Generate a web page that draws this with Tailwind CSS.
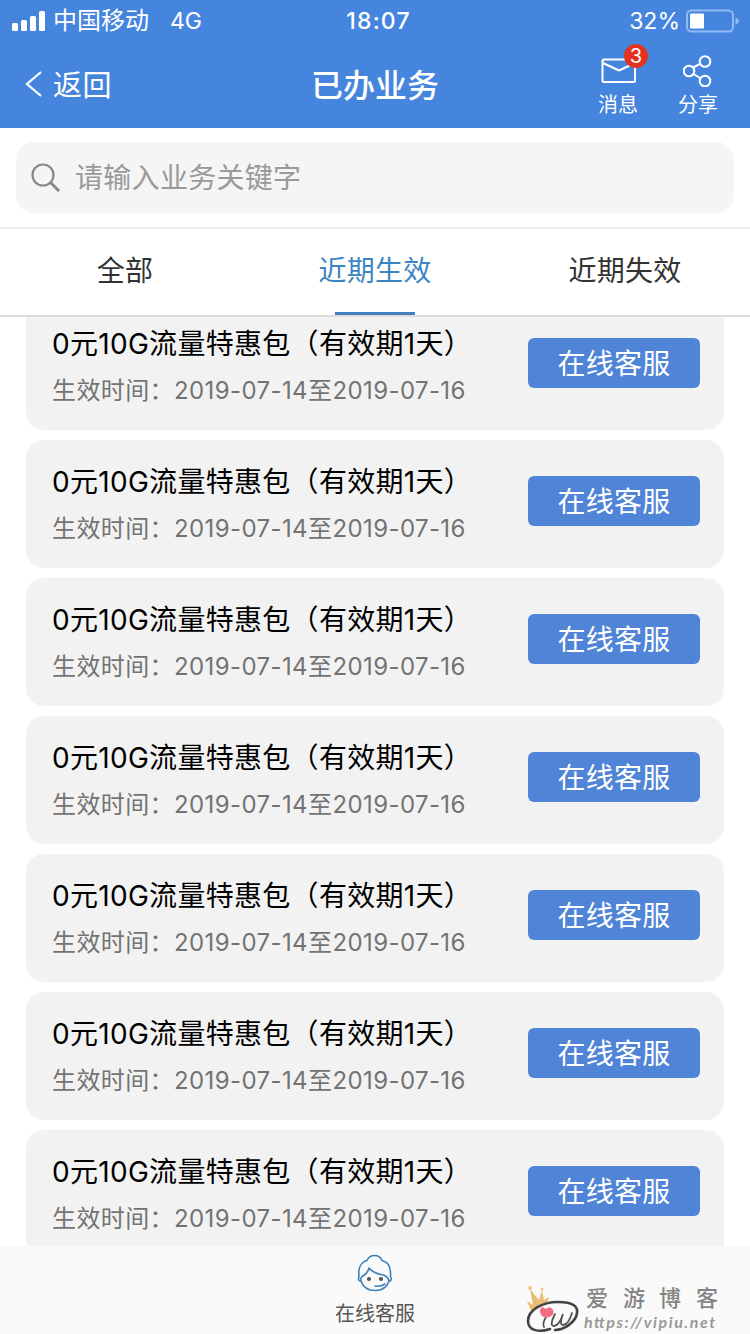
<!DOCTYPE html>
<html lang="zh-CN">
<head>
    <meta charset="UTF-8">
    <meta name="viewport" content="width=device-width, initial-scale=1.0">
    <title>已办业务</title>
    <script src="https://cdn.jsdelivr.net/npm/@tailwindcss/browser@4"></script>
</head>
<body class="w-[750px] h-[1334px] overflow-hidden flex flex-col bg-white whitespace-nowrap font-[Inter,'Noto_Sans_CJK_SC',sans-serif]">

    <!-- Header -->
    <header class="h-32 shrink-0 bg-[#4685de] text-white">
        <!-- Status bar -->
        <div class="h-10 grid grid-cols-3 items-center pl-3 pr-[11px] text-2xl leading-[42px]">
            <div class="flex items-center">
                <svg class="w-[34px] h-5 mr-[7px]" viewBox="0 0 34 20" fill="currentColor">
                    <rect x="0" y="12" width="6" height="8" rx="1.5" />
                    <rect x="9" y="9" width="6" height="11" rx="1.5" />
                    <rect x="18" y="5" width="6" height="15" rx="1.5" />
                    <rect x="27" y="0" width="6" height="20" rx="1.5" />
                </svg>
                <span>中国移动</span>
                <span class="ml-[21px] text-[23px]">4G</span>
            </div>
            <div class="text-center font-medium text-[23px] tracking-[1.2px] pl-1.5">18:07</div>
            <div class="flex items-center justify-end">
                <span class="text-[23px]">32%</span>
                <svg class="w-[54px] h-6 ml-[5px]" viewBox="0 0 54 24" fill="none">
                    <rect x="2" y="1.5" width="46" height="21" rx="4.5" stroke="#91b9f4" stroke-width="2" />
                    <rect x="5" y="4.5" width="14" height="15" rx="1" fill="white" />
                    <path d="M50.5 8.5q3.5 1.5 3.5 3.5t-3.5 3.5z" fill="#91b9f4" />
                </svg>
            </div>
        </div>

        <!-- Title bar -->
        <div class="h-22 grid grid-cols-3">
            <a href="#" class="flex items-center pl-[25px] text-[29px] tracking-[0.5px]">
                <svg class="w-[18px] h-7 mr-[10px]" viewBox="0 0 18 28" fill="none" stroke="currentColor" stroke-width="2.2">
                    <path d="M16 2L2 14l14 12" />
                </svg>
                <span class="pt-[3px]">返回</span>
            </a>
            <h1 class="flex items-center justify-center pt-[3px] text-[32px] font-medium">已办业务</h1>
            <div class="flex justify-end pr-8 text-[20px]">
                <a href="#" class="w-10 mr-10 relative flex flex-col items-center pt-[18px]">
                    <svg class="w-9 h-[26px]" viewBox="0 0 36 26" fill="none" stroke="currentColor" stroke-width="2" stroke-linejoin="round">
                        <rect x="2.5" y="1.5" width="32.5" height="22.5" rx="1.5" />
                        <path d="M3 5l16 7.5L35 5" />
                    </svg>
                    <span class="absolute left-[26px] top-1 size-6 rounded-full bg-[#e5321f] text-center text-[20px] leading-[25px]">3</span>
                    <span class="mt-[7px] leading-7">消息</span>
                </a>
                <a href="#" class="w-10 flex flex-col items-center pt-[15px]">
                    <svg class="w-[30px] h-8" viewBox="0 0 30 32" fill="none" stroke="currentColor" stroke-width="2">
                        <circle cx="6" cy="16" r="5.3" />
                        <circle cx="22" cy="6.5" r="5.3" />
                        <circle cx="22" cy="26" r="5.3" />
                        <path d="M10 12.500l8-4M9.500 18.500l8.500 5" />
                    </svg>
                    <span class="mt-1 leading-7">分享</span>
                </a>
            </div>
        </div>
    </header>

    <!-- Search -->
    <div class="h-[99px] shrink-0 px-4 pt-3.5">
        <div class="h-[71px] flex items-center rounded-[18px] bg-[#f5f5f5] pl-[15px] text-[28px] tracking-[0.3px] text-[#999]">
            <svg class="w-[30px] h-[30px] mr-[14px]" viewBox="0 0 30 30" fill="none" stroke="#888" stroke-width="2.2">
                <circle cx="12" cy="12" r="10.5" />
                <path d="M19.5 19.5l8.5 8.5" stroke-width="3" />
            </svg>
            <span class="pt-px">请输入业务关键字</span>
        </div>
    </div>

    <!-- Tabs -->
    <nav class="h-[90px] shrink-0 grid grid-cols-3 border-t-2 border-b-2 border-t-[#ececec] border-b-[#dcdcdc] text-[28px] tracking-[0.3px] text-[#333] text-center leading-[85px]">
        <a href="#">全部</a>
        <a href="#" class="relative text-[#3d85c2]">
            近期生效
            <span class="absolute left-[85px] bottom-0 w-20 h-[3px] bg-[#417fbd]"></span>
        </a>
        <a href="#">近期失效</a>
    </nav>

    <!-- Service list -->
    <main class="flex-1 min-h-0 overflow-hidden px-[26px]">
        <div id="serviceList" class="-mt-[15px] flex flex-col gap-2.5"></div>
    </main>

    <!-- Footer -->
    <footer class="relative h-22 shrink-0 bg-[#fafafa] flex flex-col items-center">
        <svg class="w-9 h-[38px] mt-2" viewBox="0 0 36 38" fill="none" stroke="#3f80b9" stroke-width="1.6" stroke-linecap="round" stroke-linejoin="round">
            <path d="M4 27Q.5 27 2 22.500C1 14 4 8 10 6.500Q12 1.500 17.500 1.500T25 6.500C32 8 34 15 33.500 22.500Q35.500 27 32 27" />
            <path d="M4 27C6 33 11 36.500 18 36.500S30 33 32 27Q31 21.500 24 20.500Q16 19 12 14Q10.500 20 5 22.500Q3.500 24 4 27Z" />
            <path d="M18 32q6 1 10-2" />
            <circle cx="12" cy="25" r="1.3" fill="#555" stroke="#555" />
            <circle cx="24" cy="25" r="1.3" fill="#555" stroke="#555" />
        </svg>
        <span class="mt-2 text-[20px] leading-7 text-[#555]">在线客服</span>

        <!-- Watermark -->
        <div class="absolute left-[526px] top-7 w-[200px] h-[60px]">
            <svg class="w-full h-full" viewBox="0 -10 200 60">
                <path d="M5 27L1 17l6 4L4 5l9 11 3-10 2 10 5-3-2 7Q11 21 5 27Z" fill="#e9bd73" />
                <circle cx="4" cy="4" r="2" fill="#edc584" />
                <circle cx="16" cy="5" r="1.5" fill="#edc584" />
                <path d="M24 45C12 49 2 46 2 37C2 26 16 18 32 18S52 23 51 29C50 38 38 46 29 46" fill="none" stroke="#444" stroke-width="2.6" stroke-linecap="round" />
                <path d="M20 33Q16 40 18 43M29 30Q23 42 28 42T37 30Q33 41 37 41Q43 40 46 29" fill="none" stroke="#555" stroke-width="1.8" stroke-linecap="round" />
                <path d="M20 34Q13 31 14 26T20 25Q24 21 27 26T20 34Z" fill="#f56b83" />
                <g fill="#858585" font-family="'Noto Sans CJK SC', sans-serif" font-size="22" font-weight="500">
                    <text x="60" y="22">爱</text>
                    <text x="97" y="22">游</text>
                    <text x="133" y="22">博</text>
                    <text x="170" y="22">客</text>
                </g>
                <text x="58" y="44" textLength="131" lengthAdjust="spacing" fill="#999" font-family="Lato, sans-serif" font-size="16" font-weight="700" font-style="italic">https://vipiu.net</text>
            </svg>
        </div>
    </footer>

    <script>
        const service = { name: '0元10G流量特惠包（有效期1天）', start: '2019-07-14', end: '2019-07-16' };
        const services = Array(7).fill(service);

        document.getElementById('serviceList').innerHTML = services.map(item => `
            <div class="h-32 shrink-0 flex justify-between rounded-[18px] bg-[#f2f2f2] pl-[26px] pr-6">
                <div class="pt-[22px]">
                    <h2 class="text-[28px] leading-10 tracking-[0.3px] text-black">${item.name}</h2>
                    <p class="mt-[9px] text-2xl leading-9 tracking-[0.4px] text-[#737373]">生效时间：${item.start}至${item.end}</p>
                </div>
                <button class="mt-9 w-[172px] h-[50px] rounded-md bg-[#4f84d6] text-[28px] leading-[52px] tracking-[0.3px] text-white">在线客服</button>
            </div>
        `).join('');
    </script>
</body>
</html>
